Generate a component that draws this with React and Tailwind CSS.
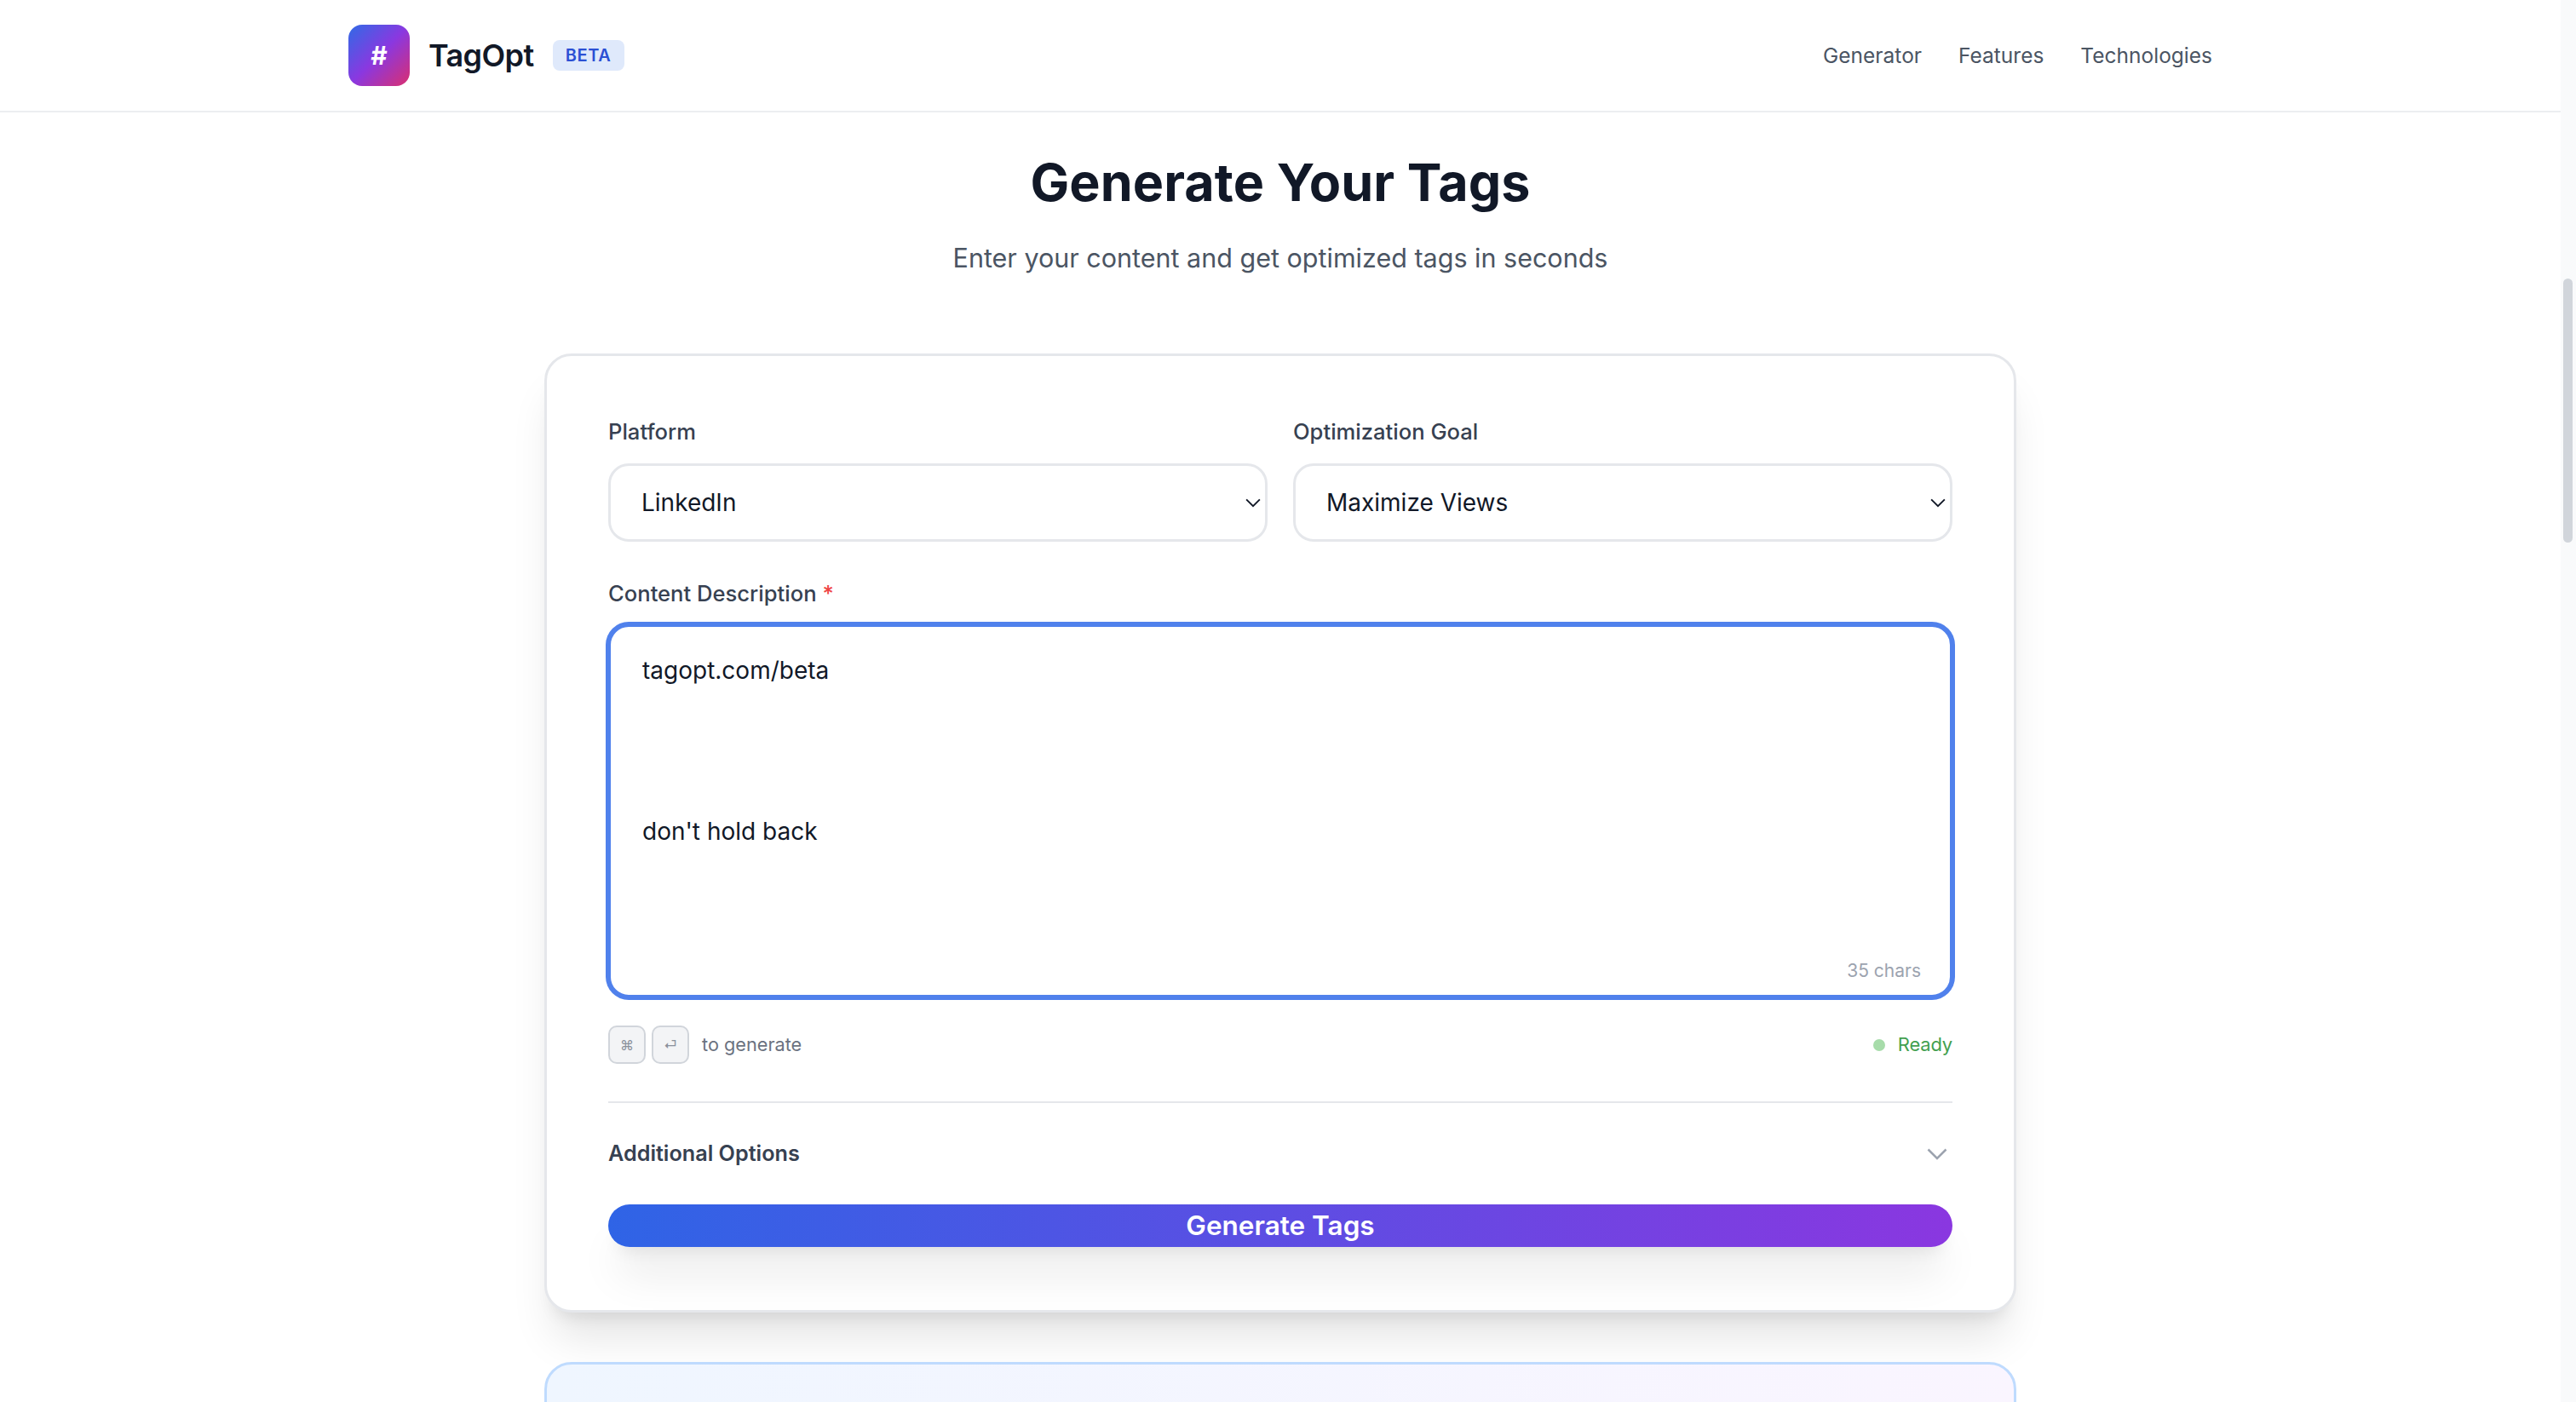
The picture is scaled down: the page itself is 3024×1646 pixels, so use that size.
const font = { fontFamily: "Inter, sans-serif" }

const Chevron = ({ className }) => (
  <svg viewBox="0 0 24 14" fill="none" stroke="currentColor" strokeWidth="2.5" className={className}>
    <path d="M1.5 1.5 12 12 22.5 1.5" />
  </svg>
)

const Header = () => (
  <header className="h-[132px] shrink-0 border-b-2 border-[#eceef1] bg-white pl-[409px] pr-[409px] flex items-center justify-between">
    <div className="flex items-center">
      <div className="w-[72px] h-[72px] rounded-[16px] bg-linear-to-br/srgb from-[#2f6be6] via-[#8a38e0] to-[#db2f6f] flex items-center justify-center text-white text-[30px] font-bold">
        #
      </div>
      <span className="ml-[22px] text-[36px] font-semibold text-[#111827] tracking-[-0.6px]">TagOpt</span>
      <span className="ml-[22px] h-[36px] w-[84px] rounded-[8px] bg-[#dfe9fb] text-[#2b50d4] text-[20px] font-semibold tracking-[0.6px] flex items-center justify-center">
        BETA
      </span>
    </div>
    <nav className="flex gap-[43px] text-[24.5px] text-[#4b5563]">
      <a>Generator</a>
      <a>Features</a>
      <a>Technologies</a>
    </nav>
  </header>
)

const SelectField = ({ label, value }) => (
  <div className="flex-1">
    <label className="block h-[36px] mb-[19px] text-[25.6px] leading-[36px] font-medium text-[#374151]">{label}</label>
    <div className="relative">
      <select
        defaultValue={value}
        className="w-full h-[92px] appearance-none rounded-[24px] border-[3px] border-[#e5e7eb] bg-white pl-[36px] text-[28px] text-[#111827] outline-none"
      >
        <option>{value}</option>
      </select>
      <Chevron className="absolute right-[8px] top-[41px] w-[18px] h-[11px] text-[#111827]" />
    </div>
  </div>
)

const Prompt = () => (
  <div className="relative mt-[18px]">
    <textarea
      readOnly
      value={"tagopt.com/beta\n\n\n\n\ndon't hold back"}
      className="block w-full h-[438px] resize-none rounded-[24px] border-[3px] border-[#5081ec] ring-[3px] ring-[#5081ec] bg-white pl-[37px] pt-[33px] text-[28px] leading-[37.8px] text-[#111827] outline-none"
    />
    <span className="absolute right-[37px] bottom-[16px] text-[21px] leading-[30px] text-[#9ca3af]">35 chars</span>
  </div>
)

const Hints = () => (
  <div className="mt-[33px] h-[45px] flex items-center justify-between">
    <div className="flex items-center">
      <kbd className="w-[44px] h-[45px] rounded-[10px] border-2 border-[#d1d5db] bg-[#f3f4f6] text-[#8b919c] text-[16px] flex items-center justify-center" style={font}>⌘</kbd>
      <kbd className="ml-[7px] w-[44px] h-[45px] rounded-[10px] border-2 border-[#d1d5db] bg-[#f3f4f6] text-[#8b919c] text-[16px] flex items-center justify-center" style={font}>⏎</kbd>
      <span className="ml-[15px] text-[21.7px] text-[#6b7280]">to generate</span>
    </div>
    <div className="flex items-center">
      <span className="w-[14px] h-[14px] rounded-full bg-[#a7dcaa]"></span>
      <span className="ml-[15px] text-[22px] tracking-[-0.2px] text-[#43a04f]">Ready</span>
    </div>
  </div>
)

const App = () => (
  <div className="h-[1646px] overflow-hidden flex bg-white" style={font}>
    <div className="flex-1 flex flex-col min-w-0">
      <Header />
      <main className="flex flex-col items-center">
        <h1 className="mt-[46px] h-[72px] text-[61px] leading-[72px] font-bold text-[#111827] tracking-[0.1px]">Generate Your Tags</h1>
        <p className="mt-[32px] h-[42px] text-[30.5px] leading-[42px] text-[#4b5563]">Enter your content and get optimized tags in seconds</p>

        <section className="mt-[91px] w-[1728px] h-[1126px] shrink-0 rounded-[32px] border-[3px] border-[#e5e7eb] bg-white px-[72px] pt-[71px] shadow-[0_40px_50px_-10px_rgba(0,0,0,0.1),0_16px_20px_-12px_rgba(0,0,0,0.1)]">
          <div className="flex gap-[30px]">
            <SelectField label="Platform" value="LinkedIn" />
            <SelectField label="Optimization Goal" value="Maximize Views" />
          </div>

          <label className="block mt-[43px] h-[36px] text-[25.6px] leading-[36px] font-medium text-[#374151]">
            Content Description <span className="text-[#ef4444]">*</span>
          </label>
          <Prompt />
          <Hints />

          <div className="mt-[44px] border-t-2 border-[#e5e7eb] h-[121px] flex items-center justify-between">
            <span className="text-[25.2px] font-semibold text-[#374151]">Additional Options</span>
            <Chevron className="mr-[6px] w-[24px] h-[14px] text-[#9ca3af]" />
          </div>

          <button className="block w-full h-[50px] rounded-full bg-linear-to-r/srgb from-[#2f64e6] to-[#8a37e0] text-white text-[31.5px] font-semibold leading-[50px] shadow-[0_40px_50px_-10px_rgba(0,0,0,0.1),0_16px_20px_-12px_rgba(0,0,0,0.1)]">
            Generate Tags
          </button>
        </section>

        <section className="mt-[58px] w-[1728px] h-[200px] shrink-0 rounded-[32px] border-[3px] border-[#bfdbfe] bg-linear-to-r/srgb from-[#eff6ff] to-[#faf5ff]"></section>
      </main>
    </div>

    <aside className="w-[18px] shrink-0 bg-[#f9fafb] pt-[327px] pl-[3px]">
      <div className="w-[11px] h-[310px] rounded-full bg-[#d1d5db]"></div>
    </aside>
  </div>
)

export default App
